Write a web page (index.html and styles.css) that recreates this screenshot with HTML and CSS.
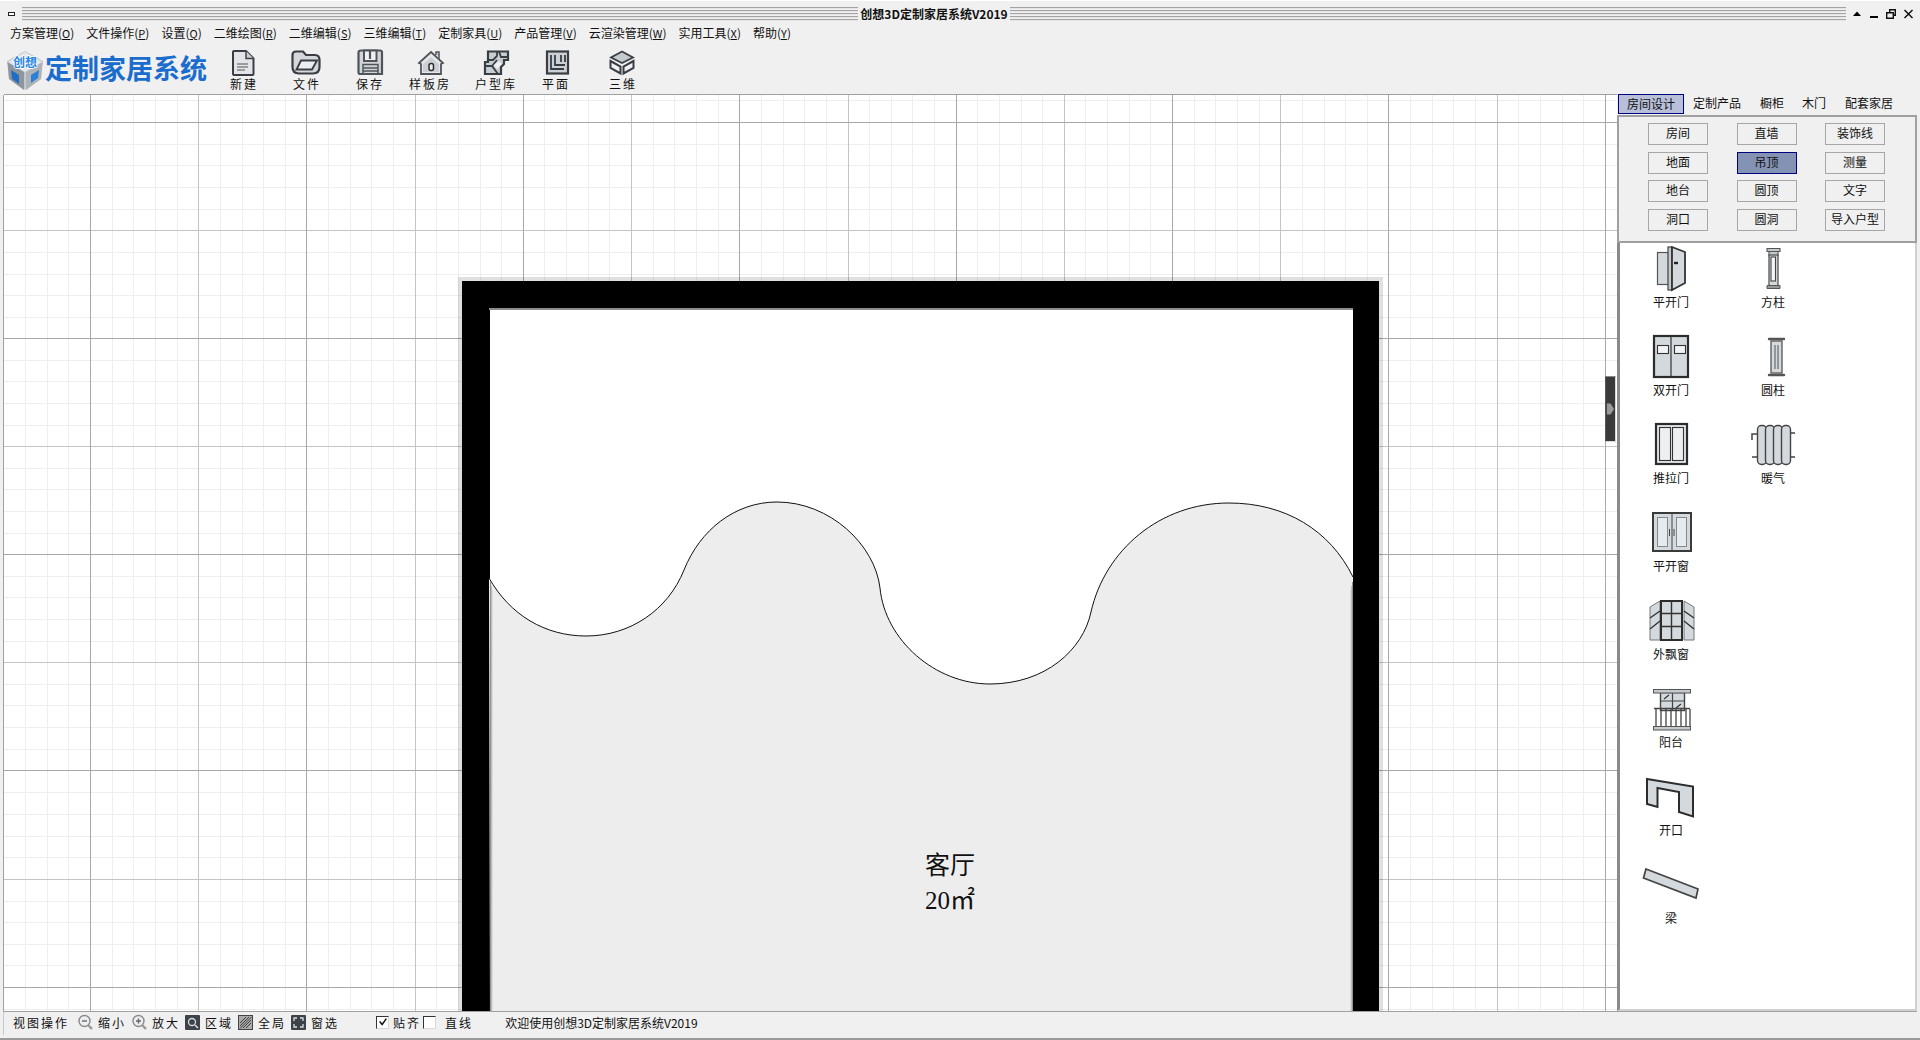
FILE: index.html
```html
<!DOCTYPE html>
<html lang="zh-CN">
<head>
<meta charset="utf-8">
<title>创想3D定制家居系统V2019</title>
<link rel="stylesheet" href="styles.css">
</head>
<body>
<div class="window">
  <header class="titlebar">
    <span class="sysmenu"></span>
    <div class="stripes"><span class="title">创想3D定制家居系统V2019</span></div>
    <div class="winctl">
      <svg viewBox="0 0 64 16" width="64" height="16"><path d="M1 10 5 5.500 9 10Z" fill="#000"/><path d="M18 10H26V12H18Z" fill="#000"/><path d="M34.700 6.700H41.300V12.300H34.700ZM37.700 6V3.700H43.300V9.300H41.500" fill="none" stroke="#111" stroke-width="1.400"/><path d="M52.500 4 60.500 12M60.500 4 52.500 12" stroke="#111" stroke-width="1.500"/></svg>
    </div>
  </header>
  <nav class="menubar">
    <span>方案管理(<u>O</u>)</span><span>文件操作(<u>P</u>)</span><span>设置(<u>Q</u>)</span><span>二维绘图(<u>R</u>)</span><span>二维编辑(<u>S</u>)</span><span>三维编辑(<u>T</u>)</span><span>定制家具(<u>U</u>)</span><span>产品管理(<u>V</u>)</span><span>云渲染管理(<u>W</u>)</span><span>实用工具(<u>X</u>)</span><span>帮助(<u>Y</u>)</span>
  </nav>
  <div class="toolbar">
    <div class="logo">
      <svg class="logo-cube" viewBox="0 0 38 41" width="38" height="41">
        <path d="M19 1 37 11 35 29 19 40 3 29 1 11Z" fill="#c4c8cc"/>
        <path d="M1.500 12 18 22V40L3 29Z" fill="#8f959c"/>
        <path d="M36.500 12 20 22V40L35 29Z" fill="#aeb3b8"/>
        <path d="M5 20 13 25V34L6 29Z" fill="#1e6fc4"/>
        <path d="M33 20 25 25V33L32 28Z" fill="#2b7fd4"/>
        <path d="M19 2 36 12 19 22 2 12Z" fill="#e4e7ea"/>
        <text class="logo-mark" x="19" y="16.500" text-anchor="middle">创想</text>
      </svg>
      <span class="logo-text">定制家居系统</span>
    </div>
    <div class="tools">
      <div class="tool">
        <svg viewBox="0 0 30 26" width="30" height="26"><path d="M5 3Q5 2 6 2H18L25.500 9.500V25Q25.500 26 24.500 26H6Q5 26 5 25Z" fill="#e2e4e7" stroke="#3a3e44" stroke-width="2"/><path d="M18 2V9.500H25.500" fill="#c9ced3" stroke="#3a3e44" stroke-width="1.400"/><path d="M9 15H20M9 18H20M9 21H17" stroke="#555" stroke-width="1.200"/></svg>
        <span>新建</span>
      </div>
      <div class="tool">
        <svg viewBox="0 0 30 26" width="30" height="26"><path d="M1.500 6Q1.500 2.500 5 2.500H12L15 6H24Q28.500 6 28.500 11V18Q28.500 24.500 22 24.500H8Q1.500 24.500 1.500 18Z" fill="#d4d7db" stroke="#3a3e44" stroke-width="2.200"/><path d="M10 11.500H26L21 20.500H5.500Z" fill="#eceef0" stroke="#3a3e44" stroke-width="1.900"/></svg>
        <span>文件</span>
      </div>
      <div class="tool">
        <svg viewBox="0 0 30 26" width="30" height="26"><path d="M7 1.500H26Q28 1.500 28 3.500V25H6Q4.500 25 4.500 23V3.500Q4.500 1.500 7 1.500Z" fill="#d0d4d8" stroke="#50545a" stroke-width="2.200"/><path d="M10 1.500V12H22.500V1.500Z" fill="#f0f0f0" stroke="#50545a" stroke-width="2"/><path d="M16 2V10" stroke="#50545a" stroke-width="2.200"/><path d="M9 25V15.500H24V25M9 19H24M9 22H24" fill="none" stroke="#50545a" stroke-width="1.500"/></svg>
        <span>保存</span>
      </div>
      <div class="tool">
        <svg viewBox="0 0 30 26" width="30" height="26"><path d="M5 14 17 3 29 14 27 15V25H7V15Z" fill="#e6e8ea" stroke="#50545a" stroke-width="1.800"/><path d="M22 6V3H25V10" fill="#d0d4d8" stroke="#50545a" stroke-width="1.500"/><path d="M9 15 17 8 25 15V23H9Z" fill="#ccd0d5"/><rect x="15" y="14.500" width="4.500" height="7" rx="2" fill="#eee" stroke="#2c2c2c" stroke-width="1.500"/></svg>
        <span>样板房</span>
      </div>
      <div class="tool">
        <svg viewBox="0 0 30 26" width="30" height="26"><path d="M8 2.500H28V11H24V15L21 18V25H5V13H8Z" fill="#c9ced3" stroke="#3a3e44" stroke-width="2.200"/><path d="M8 11H13L17 7V2.500M5 17H12L18 25M19 2.500 21 8H28M12 17 17 11" fill="none" stroke="#3a3e44" stroke-width="1.800"/><path d="M14 16 19 12 22 15 17 20Z" fill="#f0f0f0"/></svg>
        <span>户型库</span>
      </div>
      <div class="tool">
        <svg viewBox="0 0 30 26" width="30" height="26"><rect x="7" y="2.500" width="21" height="22" fill="#cdd1d6" stroke="#3a3e44" stroke-width="2.200"/><path d="M11 6V20H24M15 6V16H25M21 6V13M25 6V13" fill="none" stroke="#3a3e44" stroke-width="1.800"/></svg>
        <span>平面</span>
      </div>
      <div class="tool">
        <svg viewBox="0 0 30 26" width="30" height="26"><path d="M15 2.500 26 8.500 15 14 4 8.500Z" fill="#c4c9ce" stroke="#3a3e44" stroke-width="1.800"/><path d="M3.500 12 13.500 17.500V24.500L3.500 19ZM26.500 12 16.500 17.500V24.500L26.500 19Z" fill="#eef0f1" stroke="#3a3e44" stroke-width="2"/></svg>
        <span>三维</span>
      </div>
    </div>
  </div>
  <main class="main">
    <div class="canvas">
      <svg class="drawing" viewBox="3 94 1614 917" width="1614" height="917">
        <g transform="translate(.5 .5)" fill="none" shape-rendering="crispEdges">
          <path class="grid-minor" d="M25 94V1011M47 94V1011M68 94V1011M112 94V1011M133 94V1011M155 94V1011M177 94V1011M220 94V1011M242 94V1011M263 94V1011M285 94V1011M328 94V1011M350 94V1011M371 94V1011M393 94V1011M436 94V1011M458 94V1011M480 94V1011M501 94V1011M544 94V1011M566 94V1011M588 94V1011M609 94V1011M653 94V1011M674 94V1011M696 94V1011M718 94V1011M761 94V1011M783 94V1011M804 94V1011M826 94V1011M869 94V1011M891 94V1011M912 94V1011M934 94V1011M977 94V1011M999 94V1011M1021 94V1011M1042 94V1011M1085 94V1011M1107 94V1011M1129 94V1011M1150 94V1011M1194 94V1011M1215 94V1011M1237 94V1011M1259 94V1011M1302 94V1011M1324 94V1011M1345 94V1011M1367 94V1011M1410 94V1011M1432 94V1011M1453 94V1011M1475 94V1011M1518 94V1011M1540 94V1011M1562 94V1011M1583 94V1011"/>
          <path class="grid-minor" d="M3 100H1617M3 144H1617M3 165H1617M3 187H1617M3 209H1617M3 252H1617M3 274H1617M3 295H1617M3 317H1617M3 360H1617M3 381H1617M3 403H1617M3 425H1617M3 468H1617M3 489H1617M3 511H1617M3 533H1617M3 576H1617M3 597H1617M3 619H1617M3 641H1617M3 684H1617M3 705H1617M3 727H1617M3 749H1617M3 792H1617M3 814H1617M3 836H1617M3 857H1617M3 901H1617M3 922H1617M3 944H1617M3 965H1617M3 1009H1617"/>
          <path class="grid-mid" d="M198 94V1011M415 94V1011M631 94V1011M848 94V1011M1064 94V1011M1280 94V1011M1497 94V1011M3 230H1617M3 446H1617M3 662H1617M3 879H1617"/>
          <path class="grid-major" d="M90 94V1011M306 94V1011M523 94V1011M739 94V1011M956 94V1011M1172 94V1011M1388 94V1011M1605 94V1011M3 122H1617M3 338H1617M3 554H1617M3 770H1617M3 987H1617"/>
          <path class="grid-edge" d="M3 94H1617M3 94V1011"/>
        </g>
        <rect class="wall-glow" x="460" y="279" width="921" height="760"/>
        <rect class="wall" x="462" y="281" width="917" height="760"/>
        <rect class="room-white" x="490" y="310" width="863" height="720"/>
        <rect class="room-lip" x="489" y="308" width="864" height="2"/>
        <path class="room-floor" d="M489 578C510 615 545 636 586 636C630 636 668 610 684 570C700 530 735 502 777 502C830 502 875 545 880 588C885 640 935 684 990 684C1045 684 1083 650 1091 612C1105 550 1160 503 1229 503C1285 503 1330 530 1353 577V1030H490Z"/>
        <path class="room-curve" d="M489 578C510 615 545 636 586 636C630 636 668 610 684 570C700 530 735 502 777 502C830 502 875 545 880 588C885 640 935 684 990 684C1045 684 1083 650 1091 612C1105 550 1160 503 1229 503C1285 503 1330 530 1353 577"/>
        <path class="shade-a" d="M490.500 582V1011M1352.500 582V1011"/>
        <path class="shade-b" d="M491.500 586V1011M1351.500 586V1011"/>
        <path class="shade-c" d="M492.500 590V1011M1350.500 590V1011"/>
        <text class="room-label" x="950" y="874" text-anchor="middle">客厅</text>
        <text class="room-label" x="950" y="909" text-anchor="middle">20㎡</text>
      </svg>
      <div class="collapse"><svg viewBox="0 0 10 14" width="10" height="14"><path d="M1 1H5L9 7 5 13H1Z" fill="#9a9a9a"/></svg></div>
    </div>
    <aside class="side">
      <div class="tabs">
        <span class="tab tab-active">房间设计</span><span class="tab tab-w2">定制产品</span><span class="tab tab-w3">橱柜</span><span class="tab tab-w4">木门</span><span class="tab tab-w5">配套家居</span>
      </div>
      <div class="commands">
        <button class="cmd">房间</button><button class="cmd">直墙</button><button class="cmd">装饰线</button>
        <button class="cmd">地面</button><button class="cmd cmd-on">吊顶</button><button class="cmd">测量</button>
        <button class="cmd">地台</button><button class="cmd">圆顶</button><button class="cmd">文字</button>
        <button class="cmd">洞口</button><button class="cmd">圆洞</button><button class="cmd">导入户型</button>
      </div>
      <div class="library">
        <div class="part">
          <svg viewBox="0 0 60 48" width="60" height="48"><rect x="16.500" y="6.500" width="11" height="32" fill="#d3d9dd" stroke="#555" stroke-width="1.200"/><rect x="27" y="1" width="4" height="43" fill="#c3c9cd" stroke="#444" stroke-width="1.200"/><path d="M31 1 44 6V37L31 44Z" fill="#d3d9dd" stroke="#333" stroke-width="1.800"/><path d="M33 17H37" stroke="#222" stroke-width="2.400"/></svg>
          <span>平开门</span>
        </div>
        <div class="part">
          <svg viewBox="0 0 60 48" width="60" height="48"><rect x="13" y="2" width="34" height="41" fill="#d3d9dd" stroke="#2c2c2c" stroke-width="2.200"/><path d="M30 2V43" stroke="#333" stroke-width="1.200"/><rect x="16.500" y="11.500" width="11" height="8" fill="#f2f3f4" stroke="#333" stroke-width="1.100"/><rect x="33.500" y="11.500" width="11" height="8" fill="#f2f3f4" stroke="#333" stroke-width="1.100"/></svg>
          <span>双开门</span>
        </div>
        <div class="part">
          <svg viewBox="0 0 60 48" width="60" height="48"><rect x="15" y="2" width="31" height="40" fill="#e6e8ea" stroke="#2c2c2c" stroke-width="2.200"/><rect x="18.500" y="5.500" width="11" height="33" fill="#eeeff0" stroke="#333" stroke-width="1.100"/><rect x="31.500" y="5.500" width="11" height="33" fill="#eeeff0" stroke="#333" stroke-width="1.100"/></svg>
          <span>推拉门</span>
        </div>
        <div class="part">
          <svg viewBox="0 0 60 48" width="60" height="48"><rect x="12" y="3" width="38" height="38" fill="#d3d9dd" stroke="#3a3a3a" stroke-width="2"/><path d="M31 3V41" stroke="#444"/><rect x="16.500" y="7.500" width="10" height="29" fill="#e4ecef" stroke="#888"/><rect x="35.500" y="7.500" width="10" height="29" fill="#e4ecef" stroke="#888"/><path d="M28.500 19V26M33 19V26" stroke="#444"/></svg>
          <span>平开窗</span>
        </div>
        <div class="part">
          <svg viewBox="0 0 60 48" width="60" height="48"><path d="M9 9 19 3V42H9ZM53 9 43 3V42H53Z" fill="#d3d9dd" stroke="#777"/><path d="M9 20 19 13M9 31 19 23M53 20 43 13M53 31 43 23" stroke="#333" stroke-width="1.400"/><rect x="20" y="3" width="21" height="39" fill="#d3d9dd" stroke="#2c2c2c" stroke-width="2"/><path d="M30.500 3V42M20 15.500H41M20 28.500H41" stroke="#333" stroke-width="1.400"/></svg>
          <span>外飘窗</span>
        </div>
        <div class="part">
          <svg viewBox="0 0 60 48" width="60" height="48"><rect x="19.500" y="6.500" width="24" height="18" fill="#d3d9dd" stroke="#444" stroke-width="1.400"/><path d="M31.500 7V24M19.500 15H43.500" stroke="#444" stroke-width="1.200"/><path d="M23 13 28 9M35 22 40 18" stroke="#333" stroke-width="1.200"/><rect x="12.500" y="3.500" width="37" height="3.500" fill="#c3c9cd" stroke="#555"/><path d="M13 22.500H49M15 23V41M20 23V41M25 23V41M30 23V41M35 23V41M40 23V41M45 23V41M49 23V41" stroke="#444" stroke-width="1.300" fill="none"/><rect x="12.500" y="40.500" width="37" height="3.500" fill="#c3c9cd" stroke="#555"/></svg>
          <span>阳台</span>
        </div>
        <div class="part">
          <svg viewBox="0 0 60 48" width="60" height="48"><path d="M6 5 52 12.500V42.500L38 38V18L16.500 14V33L6 30Z" fill="#d3d9dd" stroke="#2c2c2c" stroke-width="2"/></svg>
          <span>开口</span>
        </div>
        <div class="part">
          <svg viewBox="0 0 60 48" width="60" height="48"><path d="M5 7 57 27 55 36 2.500 16Z" fill="#d3d9dd" stroke="#444" stroke-width="1.700"/></svg>
          <span>梁</span>
        </div>
        <div class="part">
          <svg viewBox="0 0 60 48" width="60" height="48"><path d="M24 2.500H37V5.500H24ZM26 5.500H35V10H26Z" fill="#c3c9cd" stroke="#555" stroke-width="1.100"/><rect x="26" y="9" width="9" height="31" fill="#d3d9dd" stroke="#555" stroke-width="1.300"/><rect x="28" y="11" width="4.500" height="24" fill="#f4f5f6" stroke="#444" stroke-width="1.100"/><path d="M24 42.500H37V39.500H24Z" fill="#999" stroke="#555"/></svg>
          <span>方柱</span>
        </div>
        <div class="part">
          <svg viewBox="0 0 60 48" width="60" height="48"><rect x="28" y="7" width="11" height="32" fill="#d3d9dd" stroke="#555" stroke-width="1.300"/><path d="M26 5H41M26 41H41" stroke="#555" stroke-width="2.400" stroke-linecap="round"/><path d="M32 11V35M35 11V35" stroke="#555"/></svg>
          <span>圆柱</span>
        </div>
        <div class="part">
          <svg viewBox="0 0 60 48" width="60" height="48"><path d="M9 18V12H15M47 11H52M9 35H15M47 35H52" fill="none" stroke="#444" stroke-width="1.500"/><rect x="14.500" y="3.500" width="9" height="39" rx="4" fill="#d3d9dd" stroke="#444" stroke-width="1.400"/><rect x="22.500" y="3.500" width="9" height="39" rx="4" fill="#d3d9dd" stroke="#444" stroke-width="1.400"/><rect x="30.500" y="3.500" width="9" height="39" rx="4" fill="#d3d9dd" stroke="#444" stroke-width="1.400"/><rect x="38.500" y="3.500" width="9" height="39" rx="4" fill="#d3d9dd" stroke="#444" stroke-width="1.400"/></svg>
          <span>暖气</span>
        </div>
      </div>
    </aside>
  </main>
  <footer class="statusbar">
    <span class="st-head">视图操作</span>
    <span class="st-item"><svg viewBox="0 0 16 16" width="16" height="16"><circle cx="7.500" cy="7" r="5.500" fill="#eceef0" stroke="#8a8a8a" stroke-width="1.400"/><path d="M5 7H10" stroke="#666" stroke-width="1.400"/><path d="M11 11 15 15" stroke="#999" stroke-width="2.400"/></svg><span>缩小</span></span>
    <span class="st-item"><svg viewBox="0 0 16 16" width="16" height="16"><circle cx="7.500" cy="7" r="5.500" fill="#eceef0" stroke="#8a8a8a" stroke-width="1.400"/><path d="M5 7H10M7.500 4.500V9.500" stroke="#666" stroke-width="1.400"/><path d="M11 11 15 15" stroke="#999" stroke-width="2.400"/></svg><span>放大</span></span>
    <span class="st-item"><svg viewBox="0 0 15 15" width="15" height="15"><rect width="15" height="15" rx="1" fill="#3d4348"/><circle cx="7" cy="7" r="3.500" fill="#3d4348" stroke="#d8dde0" stroke-width="1.300"/><path d="M10 10 13 13" stroke="#d8dde0" stroke-width="1.500"/></svg><span>区域</span></span>
    <span class="st-item"><svg viewBox="0 0 15 15" width="15" height="15"><rect x=".5" y=".5" width="14" height="14" fill="#aaa" stroke="#444"/><path d="M2 8 8 2M2 11 11 2M2 13.500 13.500 2M5 13 13 5M8 13 13 8" stroke="#333" stroke-width=".9"/></svg><span>全局</span></span>
    <span class="st-item"><svg viewBox="0 0 15 15" width="15" height="15"><rect width="15" height="15" rx="1" fill="#3d4348"/><path d="M3 6V3H6M9 3H12V6M12 9V12H9M6 12H3V9" fill="none" stroke="#d8dde0" stroke-width="1.300"/></svg><span>窗选</span></span>
    <span class="st-item st-snap"><span class="check"><svg viewBox="0 0 12 12" width="10" height="10"><path d="M2 5.500 5 9 10 2" fill="none" stroke="#111" stroke-width="1.800"/></svg></span><span>贴齐</span></span>
    <span class="st-item st-line"><span class="check"></span><span>直线</span></span>
    <span class="st-msg">欢迎使用创想3D定制家居系统V2019</span>
  </footer>
</div>
</body>
</html>
```

FILE: styles.css
```css
* { box-sizing: border-box; }
html, body { margin: 0; padding: 0; }
body {
  width: 1920px;
  height: 1040px;
  overflow: hidden;
  background: #f0f0f0;
  font-family: "Noto Sans CJK SC", "Liberation Sans", sans-serif;
  font-size: 12px;
  color: #111;
}
.window {
  width: 1920px;
  height: 1040px;
  display: flex;
  flex-direction: column;
  padding: 2px 3px 4px;
  border-bottom: 2px solid #9a9a9a;
  border-top: 1px solid #fff;
}
.titlebar {
  height: 21px;
  flex: none;
  display: flex;
  align-items: center;
  padding-left: 5px;
}
.sysmenu {
  width: 7px;
  height: 4px;
  border: 1px solid #222;
  background: #fff;
  flex: none;
  margin-right: 7px;
}
.stripes {
  width: 1824px;
  height: 14px;
  flex: none;
  display: flex;
  justify-content: center;
  align-items: center;
  background: repeating-linear-gradient(#a4a4a4 0 1px, #e6e6e6 1px 2px, #f0f0f0 2px 3px);
}
.title {
  background: #f0f0f0;
  padding: 0 2px;
  font-size: 12px;
  line-height: 14px;
  font-weight: 700;
}
.winctl { margin-left: 6px; display: flex; }
.menubar {
  height: 20px;
  flex: none;
  display: flex;
  align-items: center;
  gap: 12px;
  padding: 0 0 2px 7px;
  line-height: 18px;
}
.menubar span { white-space: nowrap; }
.menubar u { font-size: 11px; }
.toolbar {
  height: 50px;
  flex: none;
  display: flex;
  padding-left: 3px;
}
.logo {
  width: 205.500px;
  flex: none;
  display: flex;
  align-items: center;
  gap: 1px;
  padding-bottom: 2px;
}
.logo-cube { flex: none; margin-top: 4px; }
.logo-mark {
  font-size: 12px;
  font-weight: 700;
  fill: #2a86e2;
  stroke: #fff;
  stroke-width: 1.500px;
  paint-order: stroke;
}
.logo-text {
  font-size: 27px;
  line-height: 32px;
  font-weight: 700;
  color: #1a6dcc;
  white-space: nowrap;
}
.tools {
  display: grid;
  grid-template-columns: 63px 63px 63px 57px 75px 45px 89px;
}
.tool {
  display: flex;
  flex-direction: column;
  align-items: center;
  padding-top: 5px;
}
.tool svg { display: block; flex: none; overflow: visible; }
.tool span {
  line-height: 16px;
  letter-spacing: 2px;
  margin-right: -2px;
  white-space: nowrap;
  margin-top: 1px;
}
.main {
  height: 917px;
  flex: none;
  display: flex;
}
.canvas {
  width: 1614px;
  flex: none;
  position: relative;
  background: #fff;
  overflow: hidden;
}
.drawing { display: block; }
.grid-minor { stroke: #eeeeee; }
.grid-mid { stroke: #c4c4c4; }
.grid-major { stroke: #a8a8a8; }
.grid-edge { stroke: #a0a0a0; }
.wall-glow { fill: none; stroke: rgba(0,0,0,.12); stroke-width: 4; }
.wall { fill: #000; }
.room-white { fill: #fff; }
.room-lip { fill: #8c8c8c; }
.room-floor { fill: #ededed; }
.room-curve { fill: none; stroke: #111; stroke-width: 1; }
.shade-a { fill: none; stroke: rgba(0,0,0,.38); }
.shade-b { fill: none; stroke: rgba(0,0,0,.2); }
.shade-c { fill: none; stroke: rgba(0,0,0,.07); }
.room-label {
  font-family: "Liberation Serif", "Noto Sans CJK SC", serif;
  font-size: 25px;
  fill: #111;
}
.collapse {
  position: absolute;
  left: 1602px;
  top: 282px;
  width: 11px;
  height: 66px;
  background: #3a3a3a;
  border: 1px solid #d8d8d8;
  border-left-color: #555;
  border-top-color: #888;
  display: flex;
  align-items: center;
  justify-content: center;
}
.side {
  width: 300px;
  flex: none;
  display: flex;
  flex-direction: column;
}
.tabs {
  height: 21px;
  flex: none;
  display: flex;
  padding-left: 1px;
}
.tab {
  height: 20px;
  line-height: 18px;
  text-align: center;
  white-space: nowrap;
  flex: none;
}
.tab-active {
  width: 66px;
  background: #b8bfd8;
  border: 1px solid #000080;
}
.tab-w2 { width: 66px; }
.tab-w3 { width: 44px; }
.tab-w4 { width: 40px; }
.tab-w5 { width: 70px; }
.commands {
  height: 128px;
  flex: none;
  border: 2px solid #a0a0a0;
  display: grid;
  grid-template-columns: repeat(3, 60px);
  grid-auto-rows: 22px;
  column-gap: 28.500px;
  row-gap: 6.670px;
  padding: 6px 0 0 29px;
}
.cmd {
  margin: 0;
  padding: 0 0 2px;
  font: inherit;
  color: #111;
  background: #f0f0f0;
  border: 1px solid #a6a6a6;
  border-radius: 0;
  line-height: 18px;
  white-space: nowrap;
}
.cmd-on {
  background: #8492b4;
  border-color: #000080;
}
.library {
  height: 768px;
  flex: none;
  background: #fff;
  border-left: 3px solid #8a8a8a;
  border-right: 2px solid #d0d0d0;
  border-bottom: 2px solid #d0d0d0;
  padding-top: 1px;
  display: grid;
  grid-auto-flow: column;
  grid-template-columns: 102px 102px;
  grid-template-rows: repeat(8, 88px);
  justify-content: start;
}
.part {
  display: flex;
  flex-direction: column;
  align-items: center;
  padding-top: 2px;
}
.part svg { display: block; flex: none; }
.part span { line-height: 16px; }
.statusbar {
  height: 24px;
  flex: none;
  display: flex;
  align-items: center;
  border-top: 1px solid #a0a0a0;
  border-left: 1px solid #c8c8c8;
  letter-spacing: 2px;
  padding: 0 0 3px 9px;
  gap: 5px;
  white-space: nowrap;
}
.st-head { margin-right: 3px; }
.st-item { display: flex; align-items: center; gap: 5px; }
.st-item svg { display: block; flex: none; }
.st-snap { margin-left: 32px; gap: 4px; }
.st-line { margin-left: -3px; gap: 9px; }
.st-msg { letter-spacing: 0; margin-left: 27px; }
.check {
  width: 13px;
  height: 13px;
  flex: none;
  background: #fff;
  border: 1px solid #d8d8d8;
  border-top-color: #333;
  border-left-color: #333;
  display: flex;
  align-items: center;
  justify-content: center;
}
```
